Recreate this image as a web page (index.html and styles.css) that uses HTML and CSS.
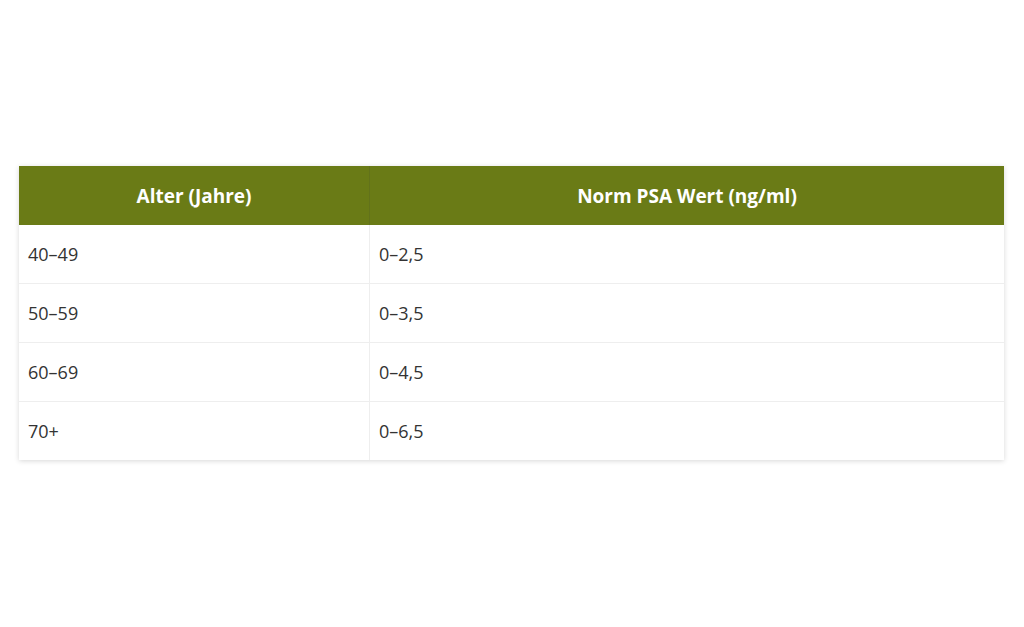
FILE: index.html
```html
<!DOCTYPE html>
<html lang="de">
<head>
<meta charset="utf-8">
<link rel="stylesheet" href="styles.css">
</head>
<body>
<div class="page">
  <div class="card">
    <table class="psa">
      <thead>
        <tr><th class="c1">Alter (Jahre)</th><th>Norm PSA Wert (ng/ml)</th></tr>
      </thead>
      <tbody>
        <tr><td>40–49</td><td>0–2,5</td></tr>
        <tr><td>50–59</td><td>0–3,5</td></tr>
        <tr><td>60–69</td><td>0–4,5</td></tr>
        <tr><td>70+</td><td>0–6,5</td></tr>
      </tbody>
    </table>
  </div>
</div>
</body>
</html>
```
FILE: styles.css
```css
html, body { margin: 0; padding: 0; background: #fff; }
body { font-family: "Open Sans", "Noto Sans", sans-serif; }
.page { padding: 166px 20px 40px 19px; }
.card {
  width: 985px;
  box-shadow: 0 1px 5px rgba(0,0,0,0.16);
}
.psa {
  width: 100%;
  border-collapse: collapse;
  font-size: 18px;
  color: #333;
}
.psa th {
  background: #6a7b16;
  color: #fff;
  font-weight: 700;
  font-size: 19px;
  height: 59px;
  padding: 0 9px;
  text-align: center;
  border-left: 1px solid #62721a;
}
.psa th.c1 { width: 332px; border-left: none; }
.psa td {
  height: 58px;
  padding: 0 9px;
  text-align: left;
  border-top: 1px solid #eee;
  border-left: 1px solid #eee;
}
.psa td:first-child { border-left: none; }
.psa tbody tr:first-child td { border-top: none; }
```
